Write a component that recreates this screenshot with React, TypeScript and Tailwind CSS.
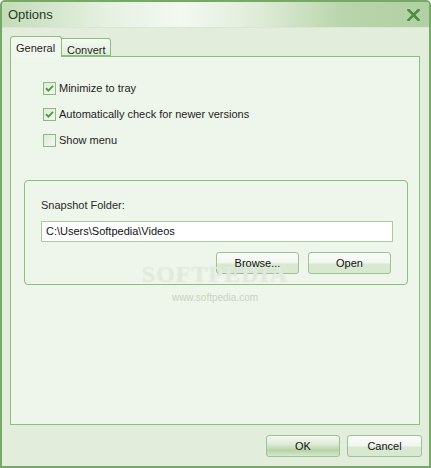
import React from 'react';

const font = { fontFamily: '"Liberation Sans", Arial, sans-serif' };

const Check = ({ checked, label }: { checked: boolean; label: string }) => (
  <div className="flex items-center h-[13px] gap-[3px]">
    <div className="w-[13px] h-[13px] border border-[#8dbb7f] bg-gradient-to-br from-[#dfe9dc] to-[#f4f8f2] flex items-center justify-center">
      {checked && (
        <svg width="9" height="9" viewBox="0 0 9 9">
          <path d="M1 4.2 L3.4 6.6 L8 1.8" fill="none" stroke="#4f9a3e" strokeWidth="1.9" />
        </svg>
      )}
    </div>
    <span className="text-[11px] text-[#1e1e1e] leading-none">{label}</span>
  </div>
);

const Btn = ({ label, primary, className }: { label: string; primary?: boolean; className?: string }) => (
  <div
    className={`h-[22px] rounded-[3px] border border-[#9cc393] flex items-center justify-center text-[11px] text-[#111] ${
      primary
        ? 'bg-[linear-gradient(to_bottom,#f4f8f1_0%,#dfebd8_40%,#b6d3a7_72%,#d8e8cf_100%)]'
        : 'bg-[linear-gradient(to_bottom,#fbfcfa_0%,#f1f6ee_50%,#d9e8d1_55%,#d9e8d1_100%)]'
    } ${className ?? ''}`}
  >
    {label}
  </div>
);

export default function App() {
  return (
    <div style={font} className="w-[431px] h-[468px] flex flex-col border-2 border-[#76a866] rounded-t-[5px] bg-[#e2eedb] overflow-hidden">
      <div className="h-[26px] flex items-center justify-between pl-[6px] pr-[9px] border-b border-[#d9e7d2] bg-[linear-gradient(to_right,#c4dcb9_0%,#e6f1e2_25%,#f3f8f1_42%,#dfecd8_60%,#b9d5ab_80%,#b1d0a3_100%)]">
        <span className="text-[13px] text-[#2a3a2a]">Options</span>
        <svg width="13" height="12" viewBox="0 0 13 12">
          <path d="M1.5 1 L11.5 11 M11.5 1 L1.5 11" stroke="#4c8f3a" strokeWidth="2.6" strokeLinecap="square" />
        </svg>
      </div>
      <div className="flex-1 flex flex-col pl-[8px] pr-[9px] pt-[7px] pb-[9px]">
        <div className="h-[21px] flex items-end">
          <div className="h-[21px] w-[52px] border border-b-0 border-[#8cbf7c] rounded-t-[3px] bg-[#f1f7ee] text-[11px] text-[#1e1e1e] pl-[5px] pt-[3px] relative z-10 -mb-px">
            General
          </div>
          <div className="h-[18px] w-[49px] border border-l-0 border-[#8cbf7c] rounded-tr-[3px] bg-[linear-gradient(to_bottom,#f5faf3,#e1eedb)] text-[11px] text-[#1e1e1e] pl-[5px] pt-[3px]">
            Convert
          </div>
        </div>
        <div className="flex-1 border border-[#8cbf7c] bg-[#eef5ea] pt-[25px] pl-[32px] pr-[11px] relative">
          <div className="flex flex-col gap-[13px]">
            <Check checked label="Minimize to tray" />
            <Check checked label="Automatically check for newer versions" />
            <Check checked={false} label="Show menu" />
          </div>
          <div className="mt-[33px] -ml-[19px] border border-[#8cbf7c] rounded-[4px] pt-[19px] pl-[16px] pr-[14px] pb-[10px]">
            <div className="text-[11px] text-[#2a2a2a] leading-none">Snapshot Folder:</div>
            <div className="mt-[10px] h-[21px] border border-[#a9cc9e] bg-white flex items-center pl-[4px] text-[11px] text-[#111]">
              C:\Users\Softpedia\Videos
            </div>
            <div className="mt-[10px] flex justify-end gap-[9px] pr-[2px]">
              <Btn label="Browse..." className="w-[83px]" />
              <Btn label="Open" className="w-[83px]" />
            </div>
          </div>
          <div className="absolute left-0 right-0 top-[205px] flex flex-col items-center pointer-events-none">
            <span className="text-[24px] leading-none font-bold tracking-[1px] text-white/40 [text-shadow:0_0_1px_#cfdccb]" style={{ fontFamily: '"Liberation Serif", serif' }}>SOFTPEDIA</span>
            <span className="text-[10px] text-[#c6d4c1] mt-[4px]">www.softpedia.com</span>
          </div>
        </div>
        <div className="mt-[10px] -mr-[2px] flex justify-end gap-[7px]">
          <Btn label="OK" primary className="w-[74px]" />
          <Btn label="Cancel" className="w-[75px]" />
        </div>
      </div>
    </div>
  );
}
